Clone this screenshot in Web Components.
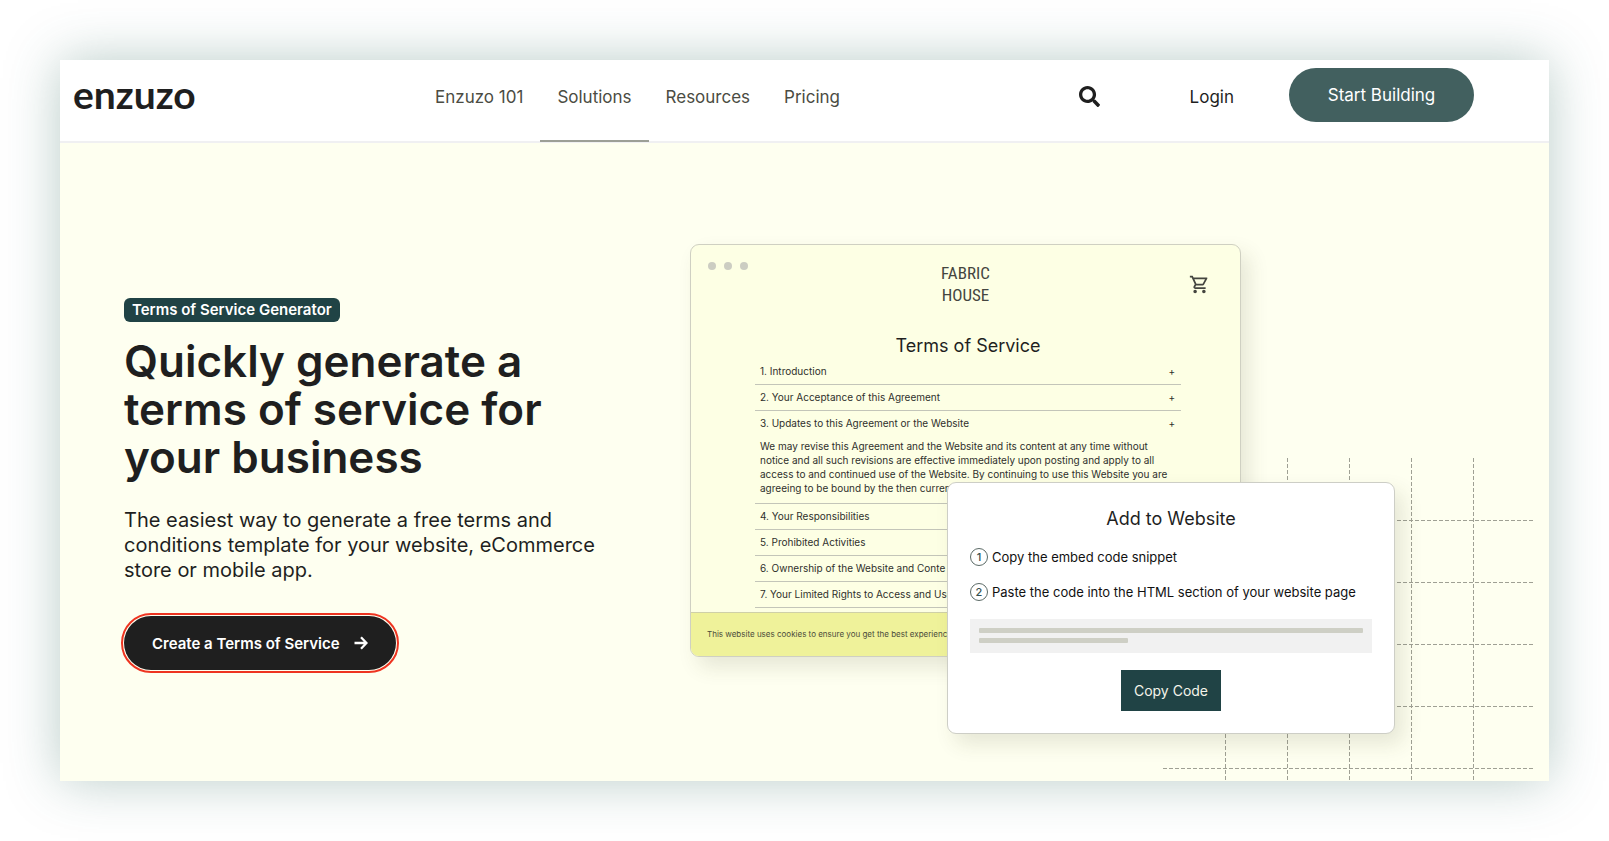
<!DOCTYPE html>
<html lang="en">
<head>
<meta charset="utf-8">
<title>Terms of Service Generator | Enzuzo</title>
<style>
    body {
        margin: 0;
        background: #fff;
        color: #1f1f1f;
        font-family: Inter, "Liberation Sans", sans-serif;
    }
</style>
</head>
<body>
<enzuzo-page>
    <site-header slot="header">
        <nav-link href="#101">Enzuzo 101</nav-link>
        <nav-link href="#solutions" active>Solutions</nav-link>
        <nav-link href="#resources">Resources</nav-link>
        <nav-link href="#pricing">Pricing</nav-link>
    </site-header>
    <hero-section>
        <hero-copy slot="copy">
            <span slot="badge">Terms of Service Generator</span>
            <span slot="title">Quickly generate a terms of service for your business</span>
            <span slot="text">The easiest way to generate a free terms and conditions template for your website, eCommerce store or mobile app.</span>
            <span slot="action">Create a Terms of Service</span>
        </hero-copy>
        <dashed-grid slot="art"></dashed-grid>
        <browser-window slot="art">
            <terms-item>1. Introduction</terms-item>
            <terms-item>2. Your Acceptance of this Agreement</terms-item>
            <terms-item>3. Updates to this Agreement or the Website
                <p slot="body">We may revise this Agreement and the Website and its content at any time without<br>notice and all such revisions are effective immediately upon posting and apply to all<br>access to and continued use of the Website. By continuing to use this Website you are<br>agreeing to be bound by the then curren</p>
            </terms-item>
            <terms-item covered>4. Your Responsibilities</terms-item>
            <terms-item covered>5. Prohibited Activities</terms-item>
            <terms-item covered>6. Ownership of the Website and Conte</terms-item>
            <terms-item covered>7. Your Limited Rights to Access and Use</terms-item>
            <span slot="cookies">This website uses cookies to ensure you get the best experienc</span>
        </browser-window>
        <snippet-card slot="art">
            <snippet-step number="1">Copy the embed code snippet</snippet-step>
            <snippet-step number="2">Paste the code into the HTML section of your website page</snippet-step>
        </snippet-card>
    </hero-section>
</enzuzo-page>

<script>
class EnzuzoPage extends HTMLElement {
    constructor() {
        super();
        this.attachShadow({ mode: 'open' });
        this.shadowRoot.innerHTML = `
        <style>
        :host {
            display: block;
            box-sizing: border-box;
            min-height: 100vh;
            padding: 60px;
        }

        .panel {
            display: flex;
            flex-direction: column;
            min-height: calc(100vh - 120px);
            background: #fefff0;
            box-shadow: 0 0 50px rgba(50, 105, 95, 0.34);
        }
        </style>
        <div class="panel">
            <slot name="header"></slot>
            <slot></slot>
        </div>
        `;
    }
}

class SiteHeader extends HTMLElement {
    constructor() {
        super();
        this.attachShadow({ mode: 'open' });
        this.shadowRoot.innerHTML = `
        <style>
        :host {
            display: block;
            background: #fff;
            border-bottom: 2px solid #f0f0f2;
        }

        header {
            display: grid;
            grid-template-columns: minmax(auto, 345px) 1fr auto;
            height: 81px;
            padding: 0 75px 0 13px;
        }

        .logo {
            height: 68px;
            color: #1f1f1f;
            font: 700 39px/68px Lato, sans-serif;
            text-decoration: none;
        }

        nav {
            display: flex;
        }

        .tools {
            display: flex;
            align-items: center;
            height: 73px;
        }

        .search {
            display: flex;
            margin-right: 90px;
            padding: 0;
            border: 0;
            background: none;
            color: #1f1f1f;
        }

        .login {
            margin-right: 55px;
            color: #1f1f1f;
            font-size: 17px;
            text-decoration: none;
        }

        .start {
            width: 185px;
            height: 54px;
            margin-bottom: 3px;
            border: 0;
            border-radius: 27px;
            background: #42605f;
            color: #fff;
            font: 17px Inter, sans-serif;
        }
        </style>
        <header>
            <a class="logo" href="#">enzuzo</a>
            <nav><slot></slot></nav>
            <div class="tools">
                <button class="search" aria-label="Search">
                    <svg width="21" height="21" viewBox="0 0 512 512" fill="currentColor"><path d="M505 442.700L405.300 343c-4.500-4.500-10.600-7-17-7H372c27.600-35.300 44-79.700 44-128C416 93.100 322.900 0 208 0S0 93.100 0 208s93.100 208 208 208c48.300 0 92.700-16.400 128-44v16.300c0 6.400 2.500 12.500 7 17l99.700 99.700c9.400 9.400 24.600 9.400 33.900 0l28.300-28.300c9.400-9.400 9.400-24.600.1-34zM208 336c-70.700 0-128-57.200-128-128 0-70.700 57.200-128 128-128 70.700 0 128 57.200 128 128 0 70.700-57.200 128-128 128z"/></svg>
                </button>
                <a class="login" href="#login">Login</a>
                <button class="start">Start Building</button>
            </div>
        </header>
        `;
    }
}

class NavLink extends HTMLElement {
    constructor() {
        super();
        this.attachShadow({ mode: 'open' });
        this.shadowRoot.innerHTML = `
        <style>
        :host {
            display: block;
            height: 80px;
        }

        :host([active]) {
            border-bottom: 2px solid #9c9f96;
        }

        a {
            display: block;
            padding: 0 17px;
            color: #4b4c43;
            font-size: 17px;
            line-height: 74px;
            text-decoration: none;
            white-space: nowrap;
        }
        </style>
        <a href="${this.getAttribute('href')}"><slot></slot></a>
        `;
    }
}

class HeroSection extends HTMLElement {
    constructor() {
        super();
        this.attachShadow({ mode: 'open' });
        this.shadowRoot.innerHTML = `
        <style>
        :host {
            display: grid;
            grid-template-columns: 566px 1fr;
            flex: 1;
            padding-left: 64px;
        }

        /* the windows are stacked freely inside this box */
        .art {
            position: relative;
            min-height: 638px;
            overflow: hidden;
            margin-left: -20px;
        }

        ::slotted(dashed-grid) {
            position: absolute;
            left: 493px;
            top: 315px;
        }

        ::slotted(browser-window) {
            position: absolute;
            left: 20px;
            top: 101px;
        }

        ::slotted(snippet-card) {
            position: absolute;
            left: 277px;
            top: 339px;
        }
        </style>
        <slot name="copy"></slot>
        <div class="art"><slot name="art"></slot></div>
        `;
    }
}

class HeroCopy extends HTMLElement {
    constructor() {
        super();
        this.attachShadow({ mode: 'open' });
        this.shadowRoot.innerHTML = `
        <style>
        :host {
            display: flex;
            flex-direction: column;
            align-items: flex-start;
            padding-top: 155px;
        }

        .badge {
            padding: 0 8px;
            border-radius: 6px;
            background: #204345;
            color: #fff;
            font-size: 15px;
            font-weight: 600;
            line-height: 24px;
        }

        h1 {
            max-width: 440px;
            margin: 15px 0 27px;
            font-size: 44px;
            font-weight: 600;
            line-height: 48px;
        }

        p {
            max-width: 480px;
            margin: 0 0 33px;
            font-size: 20px;
            line-height: 25px;
        }

        button {
            display: flex;
            align-items: center;
            gap: 14px;
            height: 54px;
            padding: 0 28px;
            border: 0;
            border-radius: 27px;
            outline: 2px solid #ee3420;
            outline-offset: 1px;
            background: #1f1f1f;
            color: #fff;
            font: 600 15px Inter, sans-serif;
        }
        </style>
        <div class="badge"><slot name="badge"></slot></div>
        <h1><slot name="title"></slot></h1>
        <p><slot name="text"></slot></p>
        <button>
            <slot name="action"></slot>
            <svg width="14" height="14" viewBox="0 0 14 14" fill="none" stroke="currentColor" stroke-width="2.300"><path d="M0.500 7H12.500M7 1.300L12.500 7L7 12.700"/></svg>
        </button>
        `;
    }
}

class DashedGrid extends HTMLElement {
    constructor() {
        super();
        this.attachShadow({ mode: 'open' });
        const columns = [62, 124, 186, 248, 310];
        const rows = [62, 124, 186, 248, 310];
        this.shadowRoot.innerHTML = `
        <style>
        :host {
            display: block;
        }

        svg {
            display: block;
        }
        </style>
        <svg width="370" height="324" stroke="#9fa094" stroke-dasharray="4 2">
            ${columns.map(x => `<path d="M${x}.500 0V324"/>`).join('')}
            ${rows.map(y => `<path d="M0 ${y}.500H370"/>`).join('')}
        </svg>
        `;
    }
}

class BrowserWindow extends HTMLElement {
    constructor() {
        super();
        this.attachShadow({ mode: 'open' });
        this.shadowRoot.innerHTML = `
        <style>
        :host {
            display: block;
            box-sizing: border-box;
            width: 551px;
            border: 1px solid #cfd0c2;
            border-radius: 9px;
            background: #fdffe4;
            box-shadow: 8px 10px 20px rgba(70, 70, 40, 0.13);
            overflow: hidden;
            color: #2f302c;
        }

        .bar {
            display: grid;
            grid-template-columns: 1fr auto 1fr;
            height: 89px;
            padding: 0 17px;
        }

        .dots {
            display: flex;
            gap: 8px;
            margin-top: 17px;
        }

        .dots i {
            width: 8px;
            height: 8px;
            border-radius: 50%;
            background: #cccdc2;
        }

        .brand {
            margin-top: 17px;
            color: #44453f;
            font: 17px/22px "Liberation Sans Narrow", "Roboto Condensed", "Open Sans Condensed", "DejaVu Sans Condensed", sans-serif;
            text-align: center;
        }

        .cart {
            justify-self: end;
            margin: 29px 13px 0 0;
        }

        h2 {
            margin: 0 0 1px;
            font-size: 18px;
            font-weight: 400;
            line-height: 24px;
            text-align: center;
            color: #1f1f1f;
        }

        .list {
            padding: 0 59px 4px 64px;
        }

        .cookies {
            padding-left: 16px;
            border-top: 1px solid #cfd0a8;
            background: #eff29a;
            color: #4b4c3a;
            font-size: 8px;
            line-height: 43px;
            white-space: nowrap;
        }
        </style>
        <div class="bar">
            <div class="dots"><i></i><i></i><i></i></div>
            <div class="brand">FABRIC<br>HOUSE</div>
            <svg class="cart" width="21" height="21" viewBox="0 0 24 24" fill="#44453f"><path d="M15.550 13c.75 0 1.410-.41 1.750-1.030l3.580-6.490A.996.996 0 0 0 20.010 4H5.210l-.94-2H1v2h2l3.600 7.590-1.350 2.440C4.520 15.370 5.480 17 7 17h12v-2H7l1.100-2h7.450zM6.160 6h12.150l-2.760 5H8.530L6.160 6zM7 18c-1.100 0-1.990.9-1.990 2S5.900 22 7 22s2-.9 2-2-.9-2-2-2zm10 0c-1.100 0-1.990.9-1.990 2s.89 2 1.990 2 2-.9 2-2-.9-2-2-2z"/></svg>
        </div>
        <div class="list">
            <h2>Terms of Service</h2>
            <slot></slot>
        </div>
        <div class="cookies"><slot name="cookies"></slot></div>
        `;
    }
}

class TermsItem extends HTMLElement {
    constructor() {
        super();
        this.attachShadow({ mode: 'open' });
        this.shadowRoot.innerHTML = `
        <style>
        :host {
            display: block;
            border-bottom: 1px solid #c3c5b9;
        }

        button {
            display: flex;
            justify-content: space-between;
            width: 100%;
            height: 25px;
            padding: 0 6px 0 5px;
            border: 0;
            background: none;
            color: inherit;
            font: 10px/25px Inter, sans-serif;
            text-align: left;
        }

        :host([covered]) i {
            display: none;
        }

        i {
            font-style: normal;
        }

        ::slotted(p) {
            margin: 3px 5px 8px;
            font-size: 10px;
            line-height: 14px;
            white-space: nowrap;
        }
        </style>
        <button><span><slot></slot></span><i>+</i></button>
        <slot name="body"></slot>
        `;
    }
}

class SnippetCard extends HTMLElement {
    constructor() {
        super();
        this.attachShadow({ mode: 'open' });
        this.shadowRoot.innerHTML = `
        <style>
        :host {
            display: flex;
            flex-direction: column;
            box-sizing: border-box;
            width: 448px;
            padding: 21px 22px 22px;
            border: 1px solid #cdcec6;
            border-radius: 9px;
            background: #fff;
            box-shadow: 8px 10px 20px rgba(70, 70, 40, 0.13);
        }

        h2 {
            margin: 0 0 5px;
            font-size: 18px;
            font-weight: 400;
            line-height: 30px;
            text-align: center;
        }

        .code {
            display: flex;
            flex-direction: column;
            gap: 5px;
            margin: 10px 0 17px;
            padding: 9px;
            background: #f1f1f1;
        }

        .code i {
            height: 5px;
            border-radius: 1px;
            background: #cecfc5;
        }

        .code i:last-child {
            width: 149px;
            margin-bottom: 1px;
        }

        button {
            align-self: center;
            width: 100px;
            height: 41px;
            padding: 0;
            border: 0;
            background: #204345;
            color: #f4f4ea;
            font: 14px Inter, sans-serif;
        }
        </style>
        <h2>Add to Website</h2>
        <slot></slot>
        <div class="code"><i></i><i></i></div>
        <button>Copy Code</button>
        `;
    }
}

class SnippetStep extends HTMLElement {
    constructor() {
        super();
        this.attachShadow({ mode: 'open' });
        this.shadowRoot.innerHTML = `
        <style>
        :host {
            display: flex;
            align-items: center;
            gap: 4px;
            height: 35px;
            color: #111;
            font-size: 13px;
            white-space: nowrap;
        }

        b {
            box-sizing: border-box;
            width: 18px;
            height: 18px;
            border: 1px solid #5b6a66;
            border-radius: 50%;
            color: #35504f;
            font-size: 11px;
            font-weight: 500;
            line-height: 16px;
            text-align: center;
        }
        </style>
        <b>${this.getAttribute('number')}</b>
        <span><slot></slot></span>
        `;
    }
}

customElements.define('enzuzo-page', EnzuzoPage);
customElements.define('site-header', SiteHeader);
customElements.define('nav-link', NavLink);
customElements.define('hero-section', HeroSection);
customElements.define('hero-copy', HeroCopy);
customElements.define('dashed-grid', DashedGrid);
customElements.define('browser-window', BrowserWindow);
customElements.define('terms-item', TermsItem);
customElements.define('snippet-card', SnippetCard);
customElements.define('snippet-step', SnippetStep);
</script>
</body>
</html>
